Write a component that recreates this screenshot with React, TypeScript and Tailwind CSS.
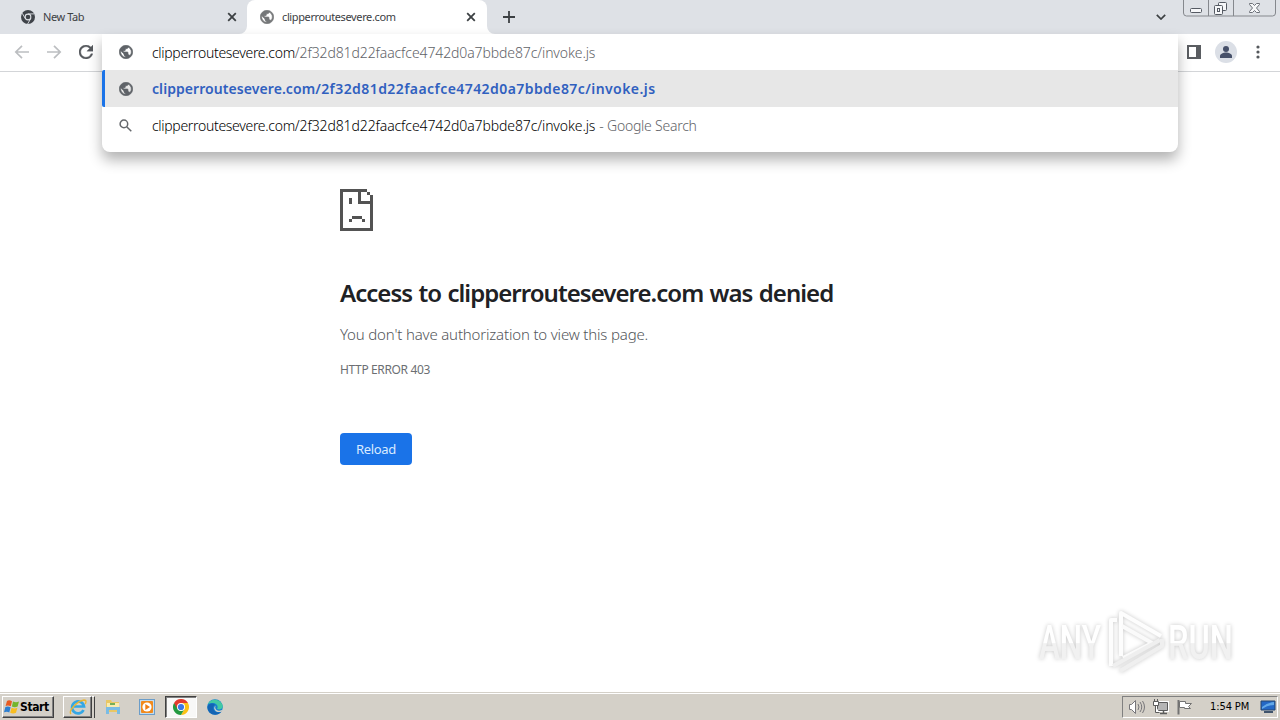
import React from 'react';

const URL_HOST = 'clipperroutesevere.com';
const URL_PATH = '/2f32d81d22faacfce4742d0a7bbde87c/invoke.js';

function GlobeIcon({ className }: { className?: string }) {
  return (
    <svg viewBox="1.5 1.5 21 21" className={className} fill="currentColor" stroke="currentColor" strokeWidth="1">
      <path fillRule="evenodd" d="M12 2C6.480 2 2 6.480 2 12s4.480 10 10 10 10-4.480 10-10S17.520 2 12 2zM11 19.930c-3.950-.49-7-3.850-7-7.930 0-.62.08-1.210.21-1.790L9 15v1c0 1.100.9 2 2 2v1.930zm6.900-2.540c-.26-.81-1-1.390-1.900-1.390h-1v-3c0-.55-.45-1-1-1H8v-2h2c.55 0 1-.45 1-1V7h2c1.100 0 2-.9 2-2v-.41c2.930 1.190 5 4.060 5 7.410 0 2.080-.8 3.970-2.100 5.390z" />
    </svg>
  );
}

function ChromeMono() {
  return (
    <svg viewBox="0 0 14 14" className="size-[14px] shrink-0">
      <circle cx="7" cy="7" r="7" fill="#3f4349" />
      <circle cx="7" cy="7" r="3.4" fill="#dee1e6" />
      <circle cx="7" cy="7" r="2.3" fill="#3f4349" />
      <path d="M7 3.9h6.2M4.3 8.6L1.2 3.2M9.7 8.6L6.6 14" stroke="#dee1e6" strokeWidth="0.9" />
    </svg>
  );
}

function CloseIcon() {
  return (
    <svg viewBox="0 0 10 10" className="size-[10px] shrink-0">
      <path d="M1.2 1.2l7.6 7.6M8.8 1.2L1.2 8.8" stroke="#3c4043" strokeWidth="1.8" />
    </svg>
  );
}

function TabStrip() {
  return (
    <div className="flex h-[34px] shrink-0 bg-[#dee1e6] text-[11px] text-[#3c4043]">
      <div className="flex w-[247px] items-center rounded-br-lg pl-[21px] pr-[10px]">
        <ChromeMono />
        <span className="ml-2 tracking-[-0.4px]">New Tab</span>
        <span className="ml-auto"><CloseIcon /></span>
      </div>
      <div className="relative flex w-[240px] items-center rounded-t-lg bg-white pl-[13px] pr-[11px]">
        <svg viewBox="0 0 8 8" className="absolute bottom-0 -left-2 size-2"><path d="M8 0v8H0a8 8 0 0 0 8-8z" fill="#fff" /></svg>
        <svg viewBox="0 0 8 8" className="absolute bottom-0 -right-2 size-2"><path d="M0 0v8h8a8 8 0 0 1-8-8z" fill="#fff" /></svg>
        <GlobeIcon className="size-[14px] shrink-0 text-[#757779]" />
        <span className="ml-2 tracking-[-0.38px]">{URL_HOST}</span>
        <span className="ml-auto"><CloseIcon /></span>
      </div>
      <div className="flex w-11 items-center justify-center">
        <svg viewBox="0 0 12 12" className="size-3"><path d="M6 0v12M0 6h12" stroke="#3c4043" strokeWidth="1.8" /></svg>
      </div>
      <div className="ml-auto flex items-start">
        <svg viewBox="0 0 10 6" className="mt-[14px] mr-[17px] h-[6px] w-[10px]">
          <path d="M.8.8L5 5 9.2.8" fill="none" stroke="#3c4043" strokeWidth="1.7" />
        </svg>
        <WindowButtons />
      </div>
    </div>
  );
}

function WindowButtons() {
  return (
    <svg viewBox="0 0 97 17" className="h-[17px] w-[97px]" fill="none">
      <path d="M.5 0v13a3 3 0 0 0 3 3h86a3 3 0 0 0 3-3V0M25.500 0v16M50.500 0v16" stroke="#85888d" />
      <rect x="7.500" y="8.500" width="11" height="4" rx="1" fill="#f6f7f9" stroke="#555a63" />
      <rect x="35.500" y="2.500" width="8" height="8" rx="1" fill="#f6f7f9" stroke="#555a63" />
      <rect x="31.500" y="5.500" width="8" height="9" rx="1" fill="#f6f7f9" stroke="#555a63" />
      <rect x="34.500" y="8.500" width="2" height="3" stroke="#555a63" />
      <path d="M66.500 3.500h3l2 2 2-2h3v1l-3 3.500 3 3.500v1h-3l-2-2-2 2h-3v-1l3-3.500-3-3.500z" fill="#f6f7f9" stroke="#6c7078" />
    </svg>
  );
}

function Toolbar() {
  return (
    <div className="flex h-[38px] shrink-0 items-center border-b border-[#d3d5d8] bg-white pb-px pl-[14px] pr-[14px]">
      <svg viewBox="0 0 16 16" className="size-4" fill="none" stroke="#bcbec1" strokeWidth="1.7">
        <path d="M15 8H2M8 1.800L1.800 8 8 14.200" />
      </svg>
      <svg viewBox="0 0 16 16" className="ml-4 size-4" fill="none" stroke="#bcbec1" strokeWidth="1.7">
        <path d="M1 8h13M8 1.800L14.200 8 8 14.200" />
      </svg>
      <svg viewBox="4 4 16 16" className="ml-[17px] size-[14px]" fill="#55585c" stroke="#55585c" strokeWidth="0.4">
        <path d="M17.650 6.350A7.958 7.958 0 0 0 12 4c-4.420 0-7.990 3.580-7.990 8s3.570 8 7.990 8c3.730 0 6.840-2.550 7.730-6h-2.080A5.990 5.990 0 0 1 12 18c-3.310 0-6-2.690-6-6s2.690-6 6-6c1.660 0 3.140.690 4.220 1.780L13 11h7V4l-2.350 2.350z" />
      </svg>
      <div className="ml-auto flex items-center">
        <svg viewBox="0 0 14 14" className="mr-[14px] size-[14px]">
          <path d="M1 1h12v12H1z" fill="#fff" stroke="#5a5d61" strokeWidth="2" />
          <path d="M9 0h5v14H9z" fill="#5a5d61" />
        </svg>
        <svg viewBox="0 0 22 22" className="mr-[19px] size-[22px]">
          <circle cx="11" cy="11" r="11" fill="#dbdfe6" />
          <circle cx="11" cy="8" r="3" fill="#465069" />
          <path d="M5 17v-2c0-2.200 3.500-3.500 6-3.500s6 1.300 6 3.500v2z" fill="#465069" />
        </svg>
        <svg viewBox="0 0 4 14" className="mr-[6px] h-[14px] w-1" fill="#55585c">
          <circle cx="2" cy="2" r="1.600" />
          <circle cx="2" cy="7" r="1.600" />
          <circle cx="2" cy="12" r="1.600" />
        </svg>
      </div>
    </div>
  );
}

// Dropdown floats over the toolbar and page
function Omnibox() {
  return (
    <div className="absolute top-[34px] left-[102px] z-10 h-[118px] w-[1076px] rounded-b-lg bg-white text-[14px] shadow-[0_8px_14px_rgba(0,0,0,0.3)]">
      <div className="flex h-9 items-center pl-[17px]">
        <GlobeIcon className="size-[14px] text-[#5f6368]" />
        <span className="ml-[19px] font-light tracking-[-0.31px] text-black">{URL_HOST}</span>
        <span className="font-light tracking-[-0.11px] text-[#5f6368]">{URL_PATH}</span>
      </div>
      <div className="flex h-[37px] items-center rounded-l-[2px] border-l-[3px] border-[#1a73e8] bg-[#e7e7e7] pl-[14px]">
        <GlobeIcon className="size-[14px] text-[#5f6368]" />
        <span className="ml-[19px] font-semibold tracking-[0.07px] text-[#3060bf]">{URL_HOST}</span>
        <span className="font-semibold tracking-[0.43px] text-[#3060bf]">{URL_PATH}</span>
      </div>
      <div className="flex h-[37px] items-center pl-[18px]">
        <svg viewBox="0 0 13 13" className="-ml-px mr-px size-[13px]" fill="none" stroke="#65686c" strokeWidth="1.500">
          <circle cx="4.900" cy="4.900" r="3.800" />
          <path d="M7.700 7.700l4.600 4.600" />
        </svg>
        <span className="ml-[19px] font-light tracking-[-0.31px] text-black">{URL_HOST}</span>
        <span className="font-light tracking-[-0.11px] text-black">{URL_PATH}</span>
        <span className="ml-1 font-light tracking-[-0.24px] text-[#5f6368]">- Google Search</span>
      </div>
    </div>
  );
}

function SadPage() {
  return (
    <svg viewBox="0 0 11 14" className="h-[42px] w-[33px]" fill="#535353" shapeRendering="crispEdges">
      <path d="M0 0h9v1H7v3h3V2h1v12H0zM1 1v12h9V5H6V1z" fillRule="evenodd" />
      <path d="M9 1h1v1H9zM3 3h1v2H3zM4 9h3.300v1H4zM3 10h1v1H3zM7.300 10h1v1h-1z" />
    </svg>
  );
}

function ErrorPage() {
  return (
    <main className="flex flex-1 flex-col items-start pt-[117px] pl-[340px]">
      <SadPage />
      <h1 className="mt-[45px] text-[24px] leading-[34px] font-semibold tracking-[-0.96px] word-spacing text-[#202124] [word-spacing:1px]">
        Access to {URL_HOST} was denied
      </h1>
      <p className="mt-[14px] text-[15px] leading-5 font-light tracking-[-0.17px] text-[#53565a]">You don't have authorization to view this page.</p>
      <p className="mt-[17px] text-[12px] leading-[18px] tracking-[-0.36px] text-[#6c6f73]">HTTP ERROR 403</p>
      <button className="mt-[54px] h-8 w-[72px] rounded-[4px] bg-[#1a73e8] pt-[2px] text-[13px] tracking-[-0.3px] text-[#d9eaff]">Reload</button>
    </main>
  );
}

function Watermark() {
  return (
    <svg viewBox="0 0 200 70" className="absolute top-[606px] left-[1036px] h-[70px] w-[200px] overflow-visible drop-shadow-[0_0_2px_rgba(0,0,0,0.22)]">
      <defs>
        <linearGradient id="wm" x1="0" y1="0" x2="0" y2="1">
          <stop offset="0.500" stopColor="#ffffff" />
          <stop offset="0.520" stopColor="#f1f1f1" />
        </linearGradient>
      </defs>
      <g fill="url(#wm)" fontFamily="Roboto, sans-serif" fontSize="49" fontWeight="500">
        <text x="3" y="53" textLength="62" lengthAdjust="spacingAndGlyphs">ANY</text>
        <text x="132" y="53" textLength="65" lengthAdjust="spacingAndGlyphs">RUN</text>
      </g>
      <g fill="none" stroke="#fdfdfd" strokeWidth="4" strokeLinejoin="round">
        <path d="M85 50V7l40 23" />
        <path d="M75 60V14h6" />
        <path d="M86 20l30 17-29 15" stroke="#fafafa" />
        <path d="M77 60l47-26M84 65l42-25v-7" stroke="#efefef" />
      </g>
    </svg>
  );
}

function ChromeLogo() {
  return (
    <svg viewBox="0 0 16 16" className="size-4">
      <path d="M8 8V0h0L14.930 4A8 8 0 0 1 8 16L11.500 10z" fill="#fbc116" />
      <path d="M1.070 4A8 8 0 0 0 8 16L11.460 10 8 8z" fill="#249a41" />
      <path d="M1.070 4A8 8 0 0 1 14.930 4H8L4.500 10z" fill="#e33b2e" />
      <circle cx="8" cy="8" r="4" fill="#fff" />
      <circle cx="8" cy="8" r="3.100" fill="#3b78e7" />
    </svg>
  );
}

function Taskbar() {
  return (
    <footer className="flex h-7 shrink-0 items-center border-t border-[#d4d0c8] bg-[#d4d0c8] pt-px shadow-[inset_0_1px_0_#fff]">
      <div className="ml-[2px] flex h-[22px] w-[52px] items-center border border-t-white border-r-[#404040] border-b-[#404040] border-l-white pl-px shadow-[inset_-1px_-1px_0_#808080]">
        <svg viewBox="0 0 16 16" className="size-4 shrink-0">
          <path d="M3 2q2-1.500 5 .2L6.800 7.300Q4 6 1.600 7z" fill="#e85b22" />
          <path d="M9 2.600q3 1.400 6 0l-1.400 5q-3 1.300-5.700-.1z" fill="#74b52c" />
          <path d="M1.400 8q2.600-1 5.200.3L5.300 13.400Q3 12 0 13.200z" fill="#2d7fd1" />
          <path d="M7.600 8.700q2.800 1.400 5.800.1L12 13.800q-3 1.300-5.800-.1z" fill="#f8bd20" />
        </svg>
        <span className="text-[12px] font-bold tracking-[-0.4px] text-black [font-family:'DejaVu_Sans_Condensed','DejaVu_Sans',sans-serif]">Start</span>
      </div>
      <div className="ml-[9px] flex h-[22px] w-[29px] items-center justify-center border border-t-white border-r-[#404040] border-b-[#404040] border-l-white shadow-[inset_-1px_-1px_0_#808080]">
        <svg viewBox="0 0 18 18" className="size-[18px]" fill="none">
          <path d="M14.500 12A6 6 0 1 1 15 8.500H5" stroke="#35a7e4" strokeWidth="2.700" />
          <path d="M2 16C-1 13 8 3 15 2c3 0 2 3 1 4" stroke="#ecb62f" strokeWidth="1.300" />
        </svg>
      </div>
      <div className="h-[22px] w-[3px] border-t border-r border-t-white border-r-[#404040] bg-[#d4d0c8]" />
      <svg viewBox="0 0 16 16" className="ml-[10px] size-4">
        <path d="M1 1h5l1 2h7v10H1z" fill="#e9c765" />
        <path d="M2 4h12v4H2z" fill="#f9ebae" />
        <path d="M1 8h14v7h-3v-4H4v4H1z" fill="#79bce5" />
        <path d="M5 4h5v2H5z" fill="#74af58" />
      </svg>
      <svg viewBox="0 0 16 16" className="ml-[18px] size-4">
        <rect x=".5" y=".5" width="15" height="15" fill="#c3dcef" stroke="#6b9dc9" />
        <rect x="2" y="2" width="12" height="12" rx="1" fill="#f18a1d" />
        <circle cx="8" cy="8" r="4.600" fill="#fff" />
        <path d="M6.300 5l4.700 3-4.700 3z" fill="#ee7d15" />
      </svg>
      <div className="ml-[10px] flex h-[22px] w-8 items-center justify-center border border-t-[#404040] border-r-white border-b-white border-l-[#404040] bg-[#f8f8f7] shadow-[inset_1px_1px_0_#808080]">
        <ChromeLogo />
      </div>
      <svg viewBox="0 0 16 16" className="ml-[10px] size-4">
        <circle cx="8" cy="8" r="7.800" fill="#1681cf" />
        <path d="M1 5C3-1 14-1 15.800 7c0 3-3 4-5.800 3 2-3-1-6-4-6-2 0-4 .5-5 1z" fill="#42c9a4" />
        <path d="M.5 8C1 4.500 6 3 8.500 6 6 6 5 10 8 12.500c2 1.300 4.500 1.200 6.500.3C10 18 .5 16 .5 8z" fill="#1464b4" />
        <path d="M9 6.500c-1.500 1-1 5 3 5.200 1.500.1 3-.7 3.500-1.200l-.8 2c-3 1.500-7 .2-7.500-3 0-1.500.7-2.600 1.800-3z" fill="#d4d0c8" />
      </svg>
      <div className="ml-auto mr-[2px] flex h-[22px] w-[156px] items-center border border-t-[#808080] border-r-white border-b-white border-l-[#808080] pl-[5px]">
        <svg viewBox="0 0 18 16" className="h-4 w-[18px]" fill="none" stroke="#77767a">
          <path d="M1.500 5.500h2l4-4v13l-4-4h-2z" fill="#fff" />
          <path d="M10 5q2 3 0 6M12 3q3.500 5 0 10M14.500 2q4 6 0 12" />
        </svg>
        <svg viewBox="0 0 17 16" className="ml-[6px] h-4 w-[17px]" fill="none" stroke="#5b5b5b">
          <path d="M5.500 3.500h10v8h-10z" fill="#b5b5b5" stroke="#fff" strokeWidth="3" />
          <path d="M5.500 3.500h10v8h-10z" fill="#b5b5b5" />
          <path d="M8 14.500h7M11.500 12v2" strokeWidth="1.500" />
          <path d="M2.500 0v3M5.500 0v3M1.500 2.500h5v4h-5zM3.500 7v6.500h4" fill="#fff" />
        </svg>
        <svg viewBox="0 0 17 16" className="ml-[7px] h-4 w-[17px]" stroke="#727272" fill="#fff">
          <path d="M2.500 1v14.500" strokeWidth="2" />
          <path d="M3.500 2.500h6v2h6l-3 3 2 2H8.500v-1h-5z" />
        </svg>
        <span className="ml-[17px] pt-px text-[11px] tracking-[-0.1px] whitespace-nowrap text-black [font-family:'DejaVu_Sans_Condensed','DejaVu_Sans',sans-serif]">1:54 PM</span>
        <svg viewBox="0 0 16 14" className="mr-px ml-auto h-[14px] w-4">
          <path d="M1 1h14v9H1z" fill="#2468c5" stroke="#27466f" />
          <path d="M2 7q5-4 12-5v3q-6 0-12 4z" fill="#63a9e8" />
          <path d="M4 11h9v2H4z" fill="#40546c" />
        </svg>
      </div>
    </footer>
  );
}

export default function App() {
  return (
    <div className="relative flex h-[720px] w-[1280px] flex-col overflow-hidden bg-white [font-family:'Noto_Sans',sans-serif]">
      <TabStrip />
      <Toolbar />
      <Omnibox />
      <ErrorPage />
      <Watermark />
      <Taskbar />
    </div>
  );
}
